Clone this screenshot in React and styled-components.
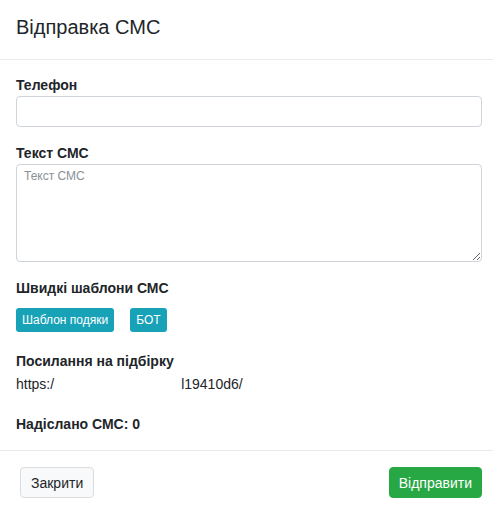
import React from 'react';
import styled, { createGlobalStyle } from 'styled-components';

const GlobalStyle = createGlobalStyle`
  html, body {
    margin: 0;
    padding: 0;
    background: #fff;
    overflow: hidden;
  }
  body {
    font-family: "Liberation Sans", Arial, Helvetica, sans-serif;
    color: #212529;
  }
  * { box-sizing: border-box; }
`;

const Modal = styled.div`
  width: 493px;
  height: 511px;
  background: #fff;
  display: flex;
  flex-direction: column;
`;

const Header = styled.div`
  height: 60px;
  padding: 13px 16px 0;
  border-bottom: 1px solid #e9ecef;
`;

const Title = styled.h5`
  margin: 0;
  font-size: 20px;
  font-weight: 400;
  line-height: 28px;
  color: #212529;
`;

const Body = styled.div`
  padding: 15px 11px 16px 16px;
  border-bottom: 1px solid #e9ecef;
`;

const Group = styled.div`
  margin-bottom: ${({ gap }) => gap ?? 16}px;
`;

const Label = styled.div`
  font-size: 14px;
  font-weight: 700;
  line-height: 20px;
  margin-bottom: ${({ mb }) => mb ?? 1}px;
  color: #212529;
`;

const Input = styled.input`
  display: block;
  width: 100%;
  height: 31px;
  border: 1px solid #ced4da;
  border-radius: 4px;
  padding: 4px 8px;
  font-size: 14px;
  font-family: inherit;
  outline: none;
`;

const TextArea = styled.textarea`
  display: block;
  width: 100%;
  height: 98px;
  border: 1px solid #ced4da;
  border-radius: 4px;
  padding: 2px 7px;
  font-size: 12px;
  line-height: 18px;
  font-family: inherit;
  outline: none;
  resize: vertical;

  &::placeholder {
    color: #8a9096;
  }
`;

const TemplateRow = styled.div`
  display: flex;
  gap: 16px;
`;

const TemplateButton = styled.button`
  height: 24px;
  padding: 0 6px;
  border: none;
  border-radius: 3px;
  background: #17a2b8;
  color: #fff;
  font-family: inherit;
  font-size: 12px;
  line-height: 24px;
`;

const LinkLine = styled.div`
  font-size: 14px;
  line-height: 20px;
  display: flex;
`;

const Hidden = styled.span`
  width: ${({ w }) => w}px;
  flex: none;
`;

const Footer = styled.div`
  display: flex;
  justify-content: space-between;
  padding: 16px 11px 0 20px;
`;

const Button = styled.button`
  height: 31px;
  padding: 0 ${({ pad }) => pad}px;
  border-radius: 4px;
  font-family: inherit;
  font-size: 14px;
  border: 1px solid ${({ primary }) => (primary ? '#28a745' : '#dcdcdc')};
  background: ${({ primary }) => (primary ? '#28a745' : '#f8f9fa')};
  color: ${({ primary }) => (primary ? '#fff' : '#212529')};
`;

export default function App() {
  return (
    <>
      <GlobalStyle />
      <Modal>
        <Header>
          <Title>Відправка СМС</Title>
        </Header>
        <Body>
          <Group>
            <Label>Телефон</Label>
            <Input type="text" />
          </Group>
          <Group>
            <Label>Текст СМС</Label>
            <TextArea placeholder="Текст СМС" />
          </Group>
          <Group gap={19}>
            <Label mb={10}>Швидкі шаблони СМС</Label>
            <TemplateRow>
              <TemplateButton>Шаблон подяки</TemplateButton>
              <TemplateButton>БОТ</TemplateButton>
            </TemplateRow>
          </Group>
          <Group gap={20}>
            <Label mb={3}>Посилання на підбірку</Label>
            <LinkLine>
              <span>https:/</span>
              <Hidden w={127} />
              <span>l19410d6/</span>
            </LinkLine>
          </Group>
          <Group gap={0}>
            <Label mb={0}>Надіслано СМС: 0</Label>
          </Group>
        </Body>
        <Footer>
          <Button pad={10}>Закрити</Button>
          <Button primary pad={9}>Відправити</Button>
        </Footer>
      </Modal>
    </>
  );
}
